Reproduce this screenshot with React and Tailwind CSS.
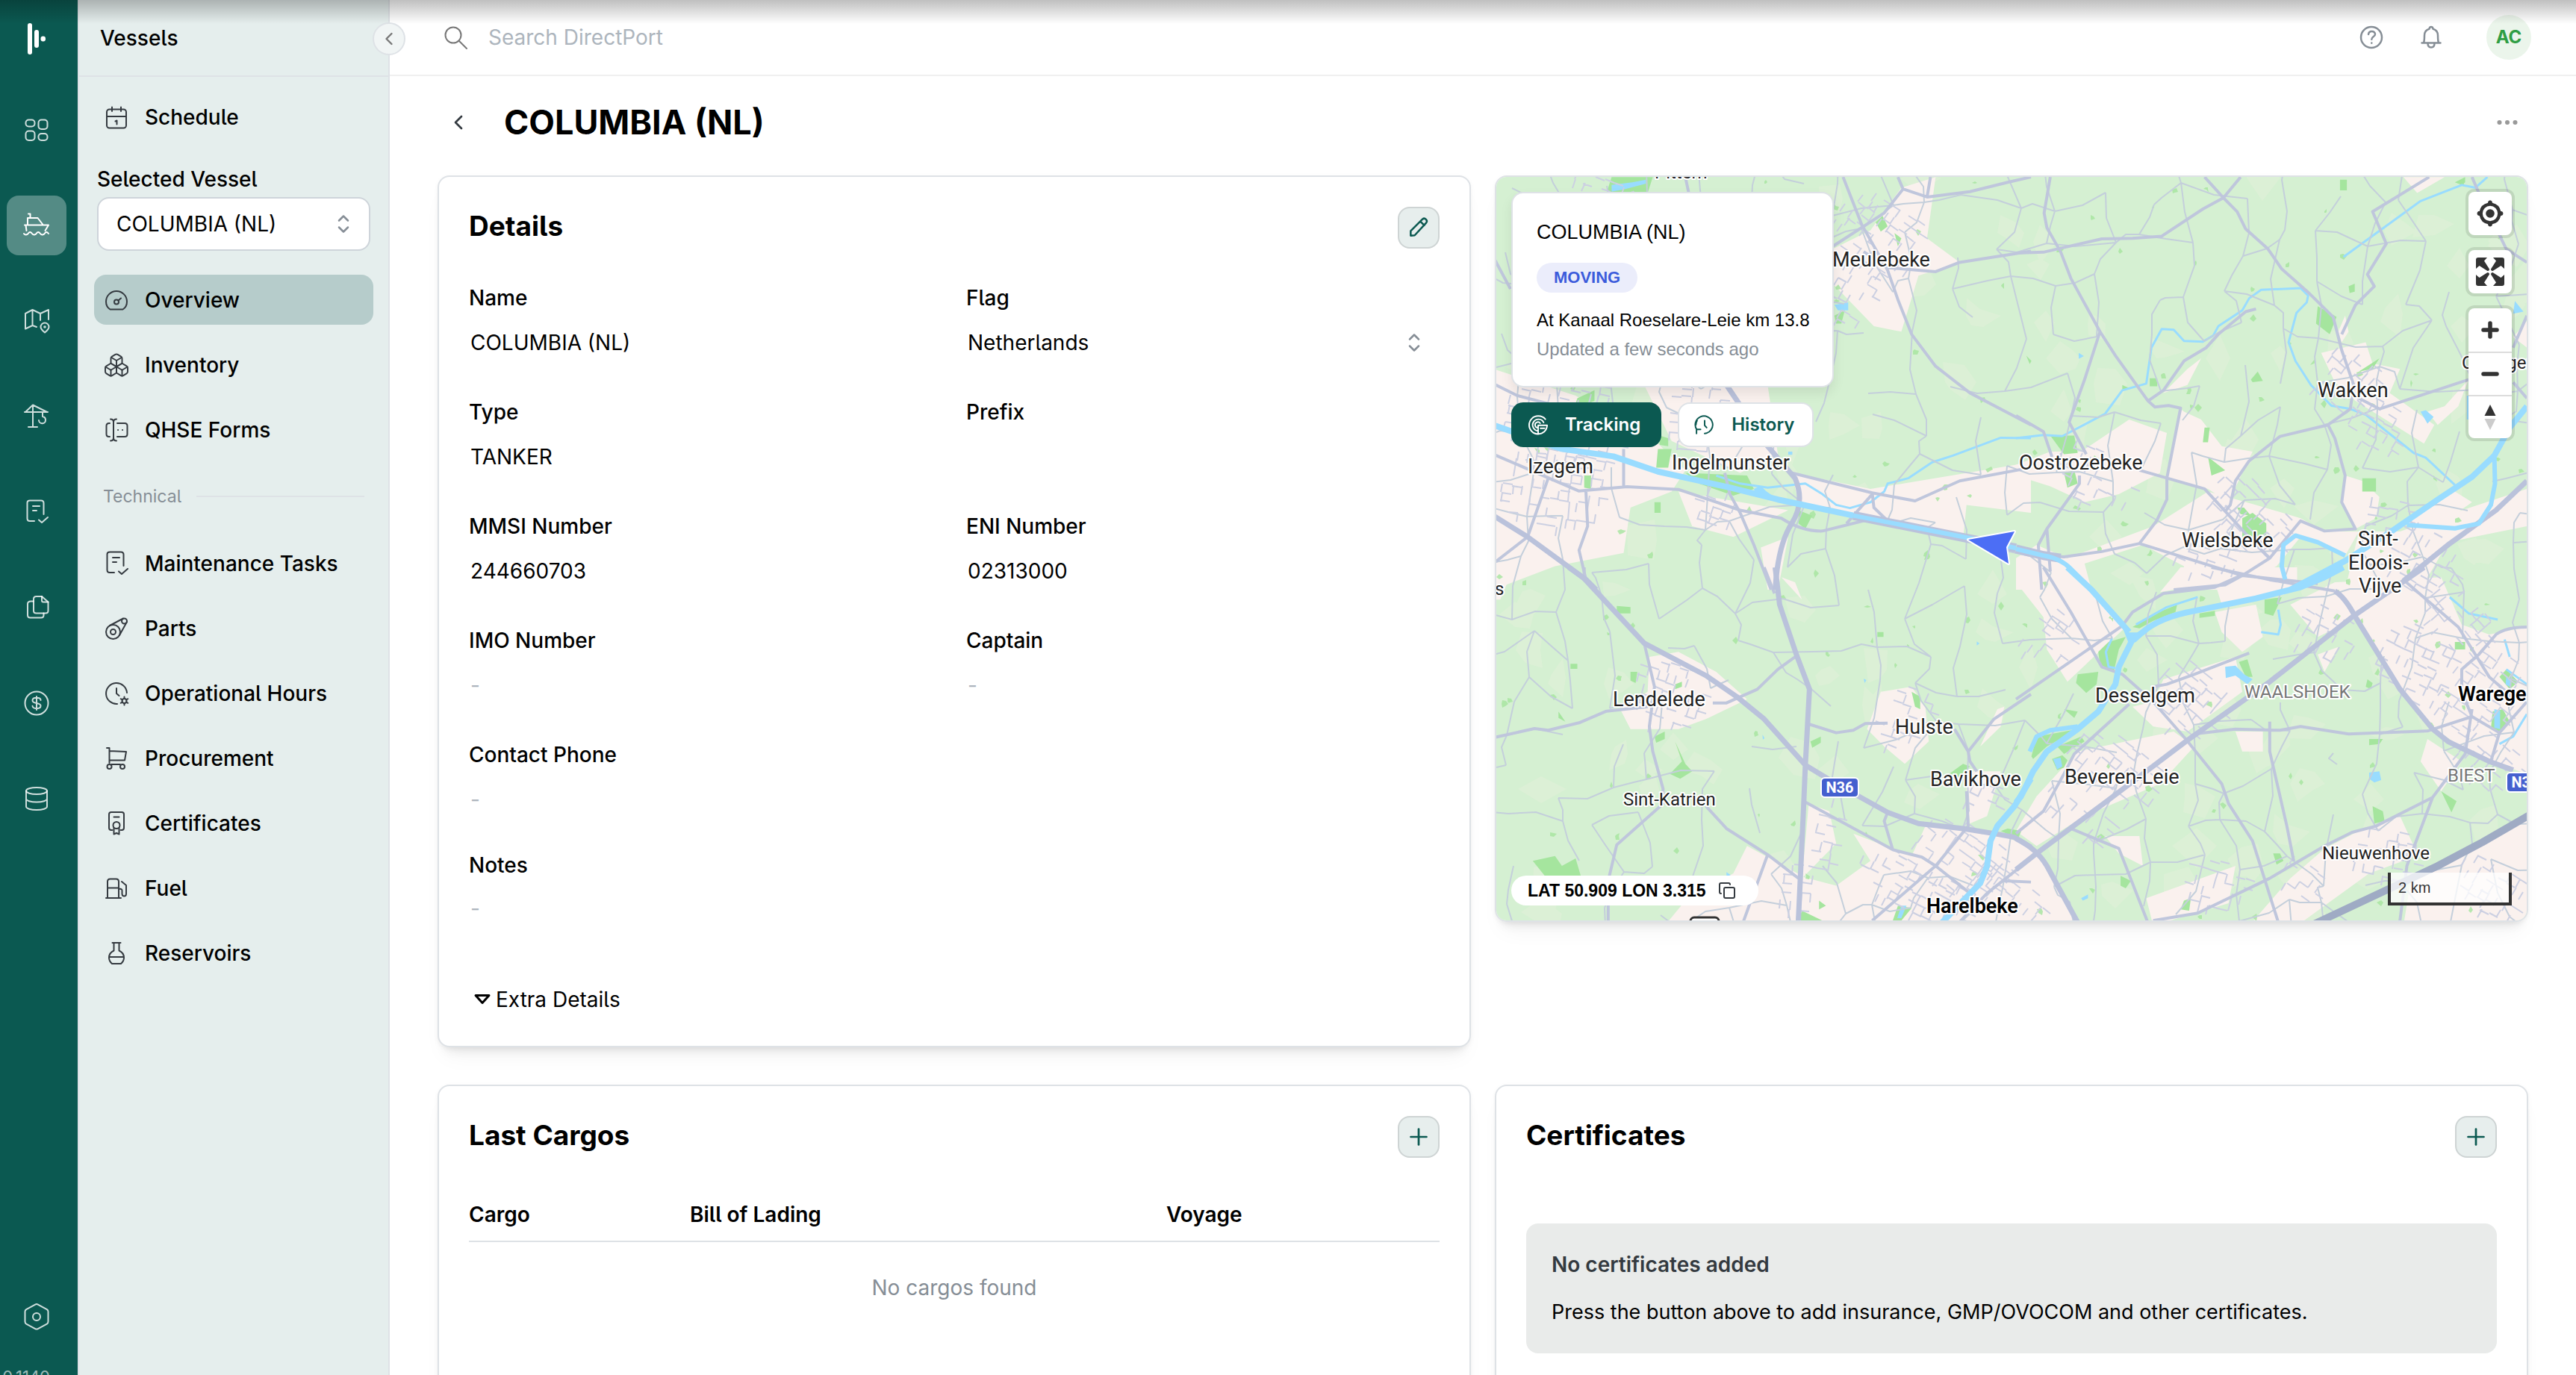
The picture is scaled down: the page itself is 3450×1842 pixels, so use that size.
import React from "react";
import { Boxes, ChevronLeft, Copy, Plus } from "lucide-react";

/* ---------- icons ---------- */

function Glyph({ children, className = "size-9", width = 2 }) {
  return (
    <svg viewBox="0 0 36 36" fill="none" stroke="currentColor" strokeWidth={width} strokeLinecap="round" strokeLinejoin="round" className={className} aria-hidden="true">
      {children}
    </svg>
  );
}

const icons = {
  dashboard: (
    <>
      <rect x="3.5" y="4.5" width="12" height="9" rx="4" />
      <rect x="20.5" y="4.5" width="12" height="12.5" rx="4" />
      <rect x="3.5" y="19.5" width="12" height="12.5" rx="4" />
      <rect x="20.5" y="23" width="12" height="9" rx="4" />
    </>
  ),
  ship: (
    <>
      <path d="M7 2.5h2.5V8M6 17V8h13.5l7 9M2 17.5h32l-4.500 7.500M3.500 17.500l1 7.500" />
      <path d="M1 29c1.500 2 4.500 2 6-.5s3.500-1.500 5 .5 4.500 2 6-.5 3.500-1.500 5 .5 4.500 2 6-.5 3.500-1.500 5 .5" />
    </>
  ),
  map: (
    <>
      <path d="M18 26l-5.500-2L3 28.500V8l9.500-5L23 8l11-5v13M12.500 3v21M23 8v9" />
      <path d="M29 33.500c-3-2.500-5.500-4.500-5.500-7.500a5.500 5.500 0 0 1 11 0c0 3-2.500 5-5.500 7.500z" />
      <circle cx="29" cy="26" r=".8" />
    </>
  ),
  crane: <path d="M2 12h31M3 12l10-9.500L32 12M13 2.500V32M7 32h12M26 12v6M26 18c2.500.5 4 2 4 4.500a4.500 4.500 0 0 1-9 .5" />,
  tasks: <path d="M15 30H9q-3.500 0-3.500-3.500v-21Q5.500 2.500 9 2.500h15q3.500 0 3.500 3.500v15M13 10h9M13 16h5M21 28.500l4 3.500 8-7" />,
  files: (
    <>
      <path d="M17.500 3H25l8.500 7.500V22q0 3.500-3.500 3.500H17.500Q14 25.500 14 22V6.500Q14 3 17.500 3z" />
      <path d="M25 3v5.500q0 2 2 2h6.500M14 9.500h-3.500Q6 9.500 6 13v15q0 3.500 3.500 3.500H24q3.500 0 3.500-3.500v-2.500" />
    </>
  ),
  dollar: (
    <>
      <circle cx="18" cy="18" r="15.500" />
      <path d="M18 9v18M23.500 14c0-2-2.500-3.200-5.500-3.200s-5.500 1-5.500 3.400 2.500 3.200 5.500 3.700 5.500 1.200 5.500 3.600-2.500 3.600-5.500 3.600-5.500-1.400-5.500-3.400" />
    </>
  ),
  database: (
    <>
      <ellipse cx="18" cy="7.500" rx="14" ry="4.500" />
      <path d="M4 7.500v21c0 2.500 6 4.500 14 4.500s14-2 14-4.500v-21M4 18c0 2.500 6 4.500 14 4.500S32 20.500 32 18" />
    </>
  ),
  settings: (
    <>
      <path d="M16.200 1.600q1.800-1 3.600 0l12 6.500q1.700 1 1.700 3v13.500q0 2-1.700 3l-12 6.500q-1.800 1-3.600 0l-12-6.500q-1.700-1-1.700-3V11.100q0-2 1.700-3z" />
      <circle cx="18" cy="18" r="5" />
    </>
  ),
  calendar: (
    <>
      <rect x="5" y="7.500" width="26" height="25" rx="3.500" />
      <path d="M12 4.500v5.500M24 4.500v5.500M5 17h26M16.500 23.500l2-1v5" />
    </>
  ),
  gauge: (
    <>
      <path d="M9.500 30.500C5.500 28 4 24 4 20a14 14 0 0 1 28 0c0 4-1.500 8-5.500 10.500z" />
      <circle cx="18" cy="20.500" r="3" />
      <path d="M20.500 18.500l3.500-3" />
    </>
  ),
  forms: <path d="M9 9H8q-3.500 0-3.500 3.500v11Q4.500 27 8 27h1M10 3.500q4 0 4 4v21q0 4-4 4M18 3.500q-4 0-4 4M18 32.500q-4 0-4-4M19 9h10q3.500 0 3.500 3.500v11Q32.500 27 29 27H19M20 18h.1M26 18h.1" />,
  belt: (
    <>
      <circle cx="13.500" cy="22.500" r="9.500" />
      <circle cx="13.500" cy="22.500" r="3.500" />
      <circle cx="28.500" cy="8" r="3.500" />
      <path d="M9 14L27 4.500M32 9L22 27" />
    </>
  ),
  hours: (
    <>
      <path d="M19 32A14 14 0 1 1 32 17M18 11v7l3.500 3" />
      <circle cx="28.500" cy="28" r="3" />
      <path d="M28.500 22.500V25M28.500 31v2.500M23.700 25.200l2.200 1.300M31 29.500l2.300 1.300M23.700 30.800l2.200-1.300M31 26.500l2.300-1.300" />
    </>
  ),
  cart: (
    <>
      <path d="M5 4h3.500v20M8.500 8L31 9l-2 11.500H8.500M11 26h12" />
      <circle cx="8.500" cy="29" r="3" />
      <circle cx="26" cy="29" r="3" />
    </>
  ),
  certificate: (
    <>
      <path d="M12.500 27H11q-3 0-3-3V6q0-3 3-3h14q3 0 3 3v18q0 3-3 3h-1.500M14.500 9.500h7" />
      <circle cx="18" cy="20.500" r="4.500" />
      <path d="M14.500 24v8.500l3.500-1.500 3.500 1.500V24" />
    </>
  ),
  fuel: <path d="M6 31V9q0-3.500 3.500-3.500h8q3.500 0 3.500 3.500v22M4 31h20M6 17.500h15M25 9l6 5v11.500q0 3-2.700 3t-2.800-3V21q0-2.500-4-2.500" />,
  flask: <path d="M12.500 4h11M14.500 4v10.500Q8 17.500 8 24q0 4.500 4 8h12q4-3.500 4-8 0-6.500-6.500-9.500V4M8 23h20" />,
  search: (
    <>
      <circle cx="15" cy="15" r="10.500" />
      <path d="M23 23l10 10" />
    </>
  ),
  help: (
    <>
      <circle cx="18" cy="18" r="14" />
      <path d="M14 14q.5-4 4.500-4t4.500 3.700q0 2-2.500 3.600-2.200 1.500-2.200 3.500M18.300 25.500v.3" />
    </>
  ),
  bell: (
    <>
      <path d="M5.500 25.500h25M8 25.500q1-3 1-10 0-7 6.500-8.800Q15.700 4 18 4t2.500 2.700Q27 8.500 27 15.500q0 7 1 10" />
      <path d="M13.500 26q0 5.500 4.500 5.500t4.500-5.500" />
    </>
  ),
  pencil: <path d="M6 30v-7L24 5q2.500-2 5 .5t.5 5L12 29.500zM20.500 8.500l6 6" />,
  selector: <path d="M12 13.500L18 7.500l6 6M12 22.500l6 6 6-6" />,
  radar: <path d="M18 34V19h15.500A15.500 15.500 0 1 1 18 3q8 0 12.500 5.500M18 28.500A10 10 0 1 1 27.500 14M18 23a4.800 4.800 0 1 1 3.500-7.500M18 34q13-1 15-12M22 24h7" />,
  history: <path d="M4 33v-7h7M4.500 26.500A15 15 0 1 1 18 33M18 11v8l3.500 4M3 18q0-4 2-7" />,
};

function Selector() {
  return <Glyph className="pointer-events-none size-9 text-[#868e96]" width={2.5}>{icons.selector}</Glyph>;
}

/* ---------- navigation ---------- */

const rail = ["dashboard", "ship", "map", "crane", "tasks", "files", "dollar", "database"];

function Rail() {
  return (
    <nav aria-label="Modules" className="flex w-[104px] shrink-0 flex-col bg-[#0b5951] pl-[9px] text-white/80">
      <div className="flex h-[104px] w-20 items-center justify-center">
        <svg viewBox="0 0 24 42" className="h-[44px] w-6" fill="#fff" aria-hidden="true">
          <rect x="0" y="0" width="6" height="42" rx="3" />
          <rect x="9" y="9" width="6" height="24" rx="3" />
          <rect x="17.500" y="17.500" width="6.500" height="7" rx="3.200" />
        </svg>
      </div>
      <div className="mt-[30px] flex flex-col gap-12">
        {rail.map((name) => (
          <a key={name} href={`#${name}`} aria-label={name} className={`flex size-20 items-center justify-center rounded-2xl ${name === "ship" ? "bg-white/30 text-white" : ""}`}>
            <Glyph>{icons[name]}</Glyph>
          </a>
        ))}
      </div>
      <a href="#settings" aria-label="settings" className="mt-auto flex size-20 items-center justify-center">
        <Glyph>{icons.settings}</Glyph>
      </a>
      <div className="flex h-[38px] w-[58px] items-end justify-end">
        <span className="-mb-4 text-[22px] leading-7 whitespace-nowrap text-white/60">0.1140</span>
      </div>
    </nav>
  );
}

function NavItem({ icon, label, active }) {
  return (
    <a href={`#${label}`} className={`flex h-[67px] items-center gap-5 rounded-2xl px-3 font-medium ${active ? "bg-[#b6cccb]" : ""}`}>
      <span className="text-[#343a40]">
        {icon === "boxes" ? <Boxes className="size-9" strokeWidth={1.3} /> : <Glyph>{icons[icon]}</Glyph>}
      </span>
      {label}
    </a>
  );
}

function Sidebar() {
  return (
    <aside className="relative w-[418px] shrink-0 border-x-2 border-[#dee2e6] bg-[#e5eeed]">
      <div className="flex h-[103px] items-center border-b-2 border-[#dee2e6] px-7 font-medium">
        <h2>Vessels</h2>
      </div>
      <button aria-label="Collapse sidebar" className="absolute top-[30px] -right-[23px] z-10 flex size-11 items-center justify-center rounded-full border-2 border-[#dee2e6] bg-[#f1f5f5] text-[#777]">
        <ChevronLeft className="size-7" strokeWidth={2} />
      </button>
      <div className="px-5 pt-5">
        <NavItem icon="calendar" label="Schedule" />
        <div className="mt-7 px-1">
          <label htmlFor="vessel" className="mb-0.5 block leading-[44px] font-medium">Selected Vessel</label>
          <div className="flex items-center rounded-2xl border-2 border-[#ced4da] bg-white">
            <select id="vessel" className="h-[68px] w-full appearance-none bg-transparent pl-6 outline-none">
              <option>COLUMBIA (NL)</option>
            </select>
            <span className="mr-4"><Selector /></span>
          </div>
        </div>
        <div className="mt-8 flex flex-col gap-5">
          <NavItem icon="gauge" label="Overview" active />
          <NavItem icon="boxes" label="Inventory" />
          <NavItem icon="forms" label="QHSE Forms" />
        </div>
        <div className="mt-[37px] flex h-[38px] items-center gap-5 px-3 text-[23px] text-[#868e96]">
          Technical
          <span className="h-0.5 flex-1 bg-[#dee2e6]" />
        </div>
        <div className="mt-[37px] flex flex-col gap-5">
          <NavItem icon="tasks" label="Maintenance Tasks" />
          <NavItem icon="belt" label="Parts" />
          <NavItem icon="hours" label="Operational Hours" />
          <NavItem icon="cart" label="Procurement" />
          <NavItem icon="certificate" label="Certificates" />
          <NavItem icon="fuel" label="Fuel" />
          <NavItem icon="flask" label="Reservoirs" />
        </div>
      </div>
    </aside>
  );
}

function TopBar() {
  return (
    <header className="flex h-[102px] items-center border-b-2 border-[#f0f0f0] pr-[60px] pl-[70px]">
      <label htmlFor="search" aria-label="Search" className="text-[#777]"><Glyph>{icons.search}</Glyph></label>
      <input id="search" placeholder="Search DirectPort" className="ml-[26px] h-16 flex-1 outline-none placeholder:text-[#adb5bd]" />
      <div className="flex items-center gap-11 text-[#868e96]">
        <button aria-label="Help"><Glyph width={2.5}>{icons.help}</Glyph></button>
        <button aria-label="Notifications"><Glyph width={2.5}>{icons.bell}</Glyph></button>
        <button className="ml-3 size-15 rounded-full bg-[#ebf5eb] text-2xl font-bold text-[#2f9e44]">AC</button>
      </div>
    </header>
  );
}

/* ---------- cards ---------- */

function Card({ title, action, className = "", children }) {
  return (
    <section className={`rounded-2xl border-2 border-[#dee2e6] bg-white p-10 shadow-[0_2px_6px_rgba(0,0,0,0.05),0_20px_30px_-10px_rgba(0,0,0,0.05),0_14px_14px_-10px_rgba(0,0,0,0.08)] ${className}`}>
      <div className="flex h-14 items-start justify-between">
        <h3 className="text-[37px] leading-[52px] font-bold">{title}</h3>
        <button aria-label={`${title} action`} className="flex size-14 items-center justify-center rounded-2xl border-2 border-[#ced4d4] bg-[#e7eeed] text-[#0b5951]">
          {action === "edit" ? <Glyph className="size-8" width={2.8}>{icons.pencil}</Glyph> : <Plus className="size-9" strokeWidth={1.8} />}
        </button>
      </div>
      {children}
    </section>
  );
}

const fields = [
  ["Name", "COLUMBIA (NL)"],
  ["Flag", "Netherlands"],
  ["Type", "TANKER"],
  ["Prefix", ""],
  ["MMSI Number", "244660703"],
  ["ENI Number", "02313000"],
  ["IMO Number", "", "-"],
  ["Captain", "", "-"],
  ["Contact Phone", "", "-"],
];

function Field({ label, value, placeholder }) {
  const id = label.toLowerCase().replace(" ", "-");
  return (
    <div>
      <label htmlFor={id} className="block leading-[44px] font-medium">{label}</label>
      {label === "Flag" ? (
        <div className="flex items-center">
          <select id={id} className="h-[76px] w-full appearance-none bg-transparent pl-0.5 outline-none">
            <option>{value}</option>
          </select>
          <span className="mr-4"><Selector /></span>
        </div>
      ) : (
        <input id={id} readOnly value={value} placeholder={placeholder} className="block h-[76px] w-full pl-0.5 outline-none placeholder:text-[#adb5bd]" />
      )}
    </div>
  );
}

function DetailsCard() {
  return (
    <Card title="Details" action="edit">
      <div className="mt-11 grid grid-cols-2 gap-x-8 gap-y-[33px]">
        {fields.map(([label, value, placeholder]) => (
          <Field key={label} label={label} value={value} placeholder={placeholder} />
        ))}
      </div>
      <div className="mt-7">
        <label htmlFor="notes" className="block leading-[44px] font-medium">Notes</label>
        <textarea id="notes" readOnly rows={1} placeholder="-" className="block h-[72px] w-full resize-none pl-0.5 leading-[72px] outline-none placeholder:text-[#adb5bd]" />
      </div>
      <button className="mt-16 flex h-11 items-center gap-1.5 pl-1.5">
        <svg viewBox="0 0 24 16" className="h-4 w-6" fill="none" stroke="#000" strokeWidth="3" strokeLinejoin="round" aria-hidden="true">
          <path d="M3 2.500h18l-9 10z" />
        </svg>
        Extra Details
      </button>
    </Card>
  );
}

function CargosCard() {
  return (
    <Card title="Last Cargos" className="min-h-[480px]">
      <table className="mt-10 w-full table-fixed text-left">
        <thead>
          <tr className="h-[72px] border-b-2 border-[#dee2e6]">
            <th className="w-[296px] font-semibold">Cargo</th>
            <th className="font-semibold">Bill of Lading</th>
            <th className="w-[366px] font-semibold">Voyage</th>
          </tr>
        </thead>
        <tbody>
          <tr className="h-[122px]">
            <td colSpan={3} className="text-center text-[#868e96]">No cargos found</td>
          </tr>
        </tbody>
      </table>
    </Card>
  );
}

function CertificatesCard() {
  return (
    <Card title="Certificates" className="min-h-[480px]">
      <div className="mt-[88px] rounded-2xl bg-[#e9ebea] px-[34px] py-[33px] leading-[44px]">
        <p className="font-semibold text-[#343a40]">No certificates added</p>
        <p className="mt-5 text-[27px]">Press the button above to add insurance, GMP/OVOCOM and other certificates.</p>
      </div>
    </Card>
  );
}

/* ---------- map ---------- */

// small deterministic generator so the lanes and fields are the same on every render
function makeRandom(seed) {
  let s = seed;
  return () => {
    s = (s * 16807) % 2147483647;
    return s / 2147483647;
  };
}

function buildLanes() {
  const rnd = makeRandom(77);
  const step = 60;
  const cols = 25;
  const rows = 19;
  const pts = [];
  for (let r = 0; r < rows; r++) {
    pts.push([]);
    for (let c = 0; c < cols; c++) {
      pts[r].push([Math.round((c - 0.5) * step + (rnd() - 0.5) * 46), Math.round((r - 0.5) * step + (rnd() - 0.5) * 46)]);
    }
  }
  let d = "";
  const join = (a, b) => {
    const mx = Math.round((a[0] + b[0]) / 2 + (rnd() - 0.5) * 18);
    const my = Math.round((a[1] + b[1]) / 2 + (rnd() - 0.5) * 18);
    d += `M${a[0]} ${a[1]}L${mx} ${my}L${b[0]} ${b[1]}`;
  };
  for (let r = 0; r < rows - 1; r++) {
    for (let c = 0; c < cols - 1; c++) {
      if (rnd() < 0.46) join(pts[r][c], pts[r][c + 1]);
      if (rnd() < 0.66) join(pts[r][c], pts[r + 1][c]);
    }
  }
  return d;
}

function buildPatches(seed, count, min, max) {
  const rnd = makeRandom(seed);
  let d = "";
  for (let i = 0; i < count; i++) {
    const x = rnd() * 1380;
    const y = rnd() * 994;
    const n = 4 + Math.floor(rnd() * 3);
    for (let k = 0; k < n; k++) {
      const a = (k / n) * Math.PI * 2;
      const rad = min + rnd() * (max - min);
      d += `${k ? "L" : "M"}${Math.round(x + Math.cos(a) * rad)} ${Math.round(y + Math.sin(a) * rad)}`;
    }
    d += "Z";
  }
  return d;
}

// centre x, centre y, radius x, radius y, street angle in degrees
const towns = [
  [510, 75, 70, 55, 35], [480, 150, 40, 50, 30], [90, 330, 90, 70, 12], [75, 420, 80, 60, 8], [270, 320, 50, 60, 5],
  [285, 435, 45, 32, 20], [800, 400, 65, 45, 25], [1135, 270, 45, 50, 40], [1180, 330, 45, 40, 30], [1010, 450, 70, 45, 45],
  [950, 510, 50, 35, 20], [1190, 450, 35, 30, 10], [1240, 510, 55, 50, 30], [150, 15, 60, 20, 20], [225, 690, 55, 50, 18],
  [545, 720, 45, 50, 20], [655, 820, 30, 35, 25], [440, 880, 26, 60, 12], [620, 910, 70, 55, 35], [560, 950, 90, 40, 28],
  [690, 960, 60, 35, 40], [740, 610, 35, 45, 35], [930, 700, 60, 50, 40], [830, 790, 75, 45, 38], [780, 850, 60, 30, 40],
  [1110, 610, 50, 40, 30], [1230, 650, 60, 60, 25], [1320, 690, 60, 70, 35], [1290, 590, 60, 40, 50], [1330, 780, 50, 40, 40],
  [1190, 905, 50, 40, 10], [960, 945, 50, 40, 15], [1080, 940, 40, 30, 35], [400, 950, 30, 40, 5], [1330, 950, 60, 40, 30],
];

function buildStreets() {
  const rnd = makeRandom(4211);
  let d = "";
  towns.forEach(([cx, cy, rx, ry, deg]) => {
    const t = (deg * Math.PI) / 180;
    const cos = Math.cos(t);
    const sin = Math.sin(t);
    const put = (u, v) => `${Math.round(cx + u * cos - v * sin)} ${Math.round(cy + u * sin + v * cos)}`;
    for (let u = -rx; u < rx; u += 13) {
      for (let v = -ry; v < ry; v += 12) {
        if ((u * u) / (rx * rx) + (v * v) / (ry * ry) > 0.9) continue;
        const j = (rnd() - 0.5) * 4;
        if (rnd() < 0.45) d += `M${put(u, v + j)}L${put(u + 13, v + j)}`;
        if (rnd() < 0.4) d += `M${put(u + j, v)}L${put(u + j, v + 12)}`;
      }
    }
  });
  return d;
}

const lanes = buildLanes();
const streets = buildStreets();
const fieldPatches = buildPatches(915, 150, 8, 34);
const copses = buildPatches(331, 170, 1, 6);

const tiles = [
  {
    at: "translate(-4 -7) scale(0.4592 0.3571)",
    urban: "M1190 60L1290 20L1265 250L1360 340L1240 390L1190 600L1110 580L990 420L990 290L1100 220ZM0 740L240 840L480 1020L560 1120L520 1200L400 1260L380 1430L180 1480L0 1568ZM440 800L800 800L830 1060L720 1130L520 1010ZM540 1200L860 1270L700 1370L580 1330ZM870 1130L1100 1190L1568 1090L1568 1280L1380 1250L1370 1380L1050 1290L890 1240ZM780 1410L860 1370L830 1568L800 1568Z",
    woods: "M345 20L465 20L450 80L330 80ZM1115 190l20-25l15 40l-20 20zM245 850l50-30l0 40l-60 30zM560 1130L740 1140L760 1190L700 1215L600 1170ZM890 1270l40 20l-20 50l-20-20zM480 1040l40 0l-10 70l-35 0zM995 540l30-20l-10 50l-15 0zM485 990l25 10l0 30l-25-5zM265 1140l20 0l0 50l-20-5zM470 1240l18 0l0 40l-18 0zM1170 230l20 20l-10 30z",
    water: "M345 50l60-10l40-10l0 15l-60 20l-40 10zM995 500l40-10l0 30l-30 0zM760 1190l20-12l15 20l20 18l-50-8zM860 1050l12 0l0 12l-12 0z",
    thin: "M650 1140L720 1170L800 1185L910 1170L960 1210L1000 1250L1040 1262L1100 1240L1140 1200L1150 1170L1210 1150L1280 1090L1340 1065L1480 998L1568 1000",
    bank: "M1050 1290L1300 1354L1524 1412",
    river: "M0 950L200 1040L350 1068L480 1125L690 1185L830 1230L1050 1290",
    side: "M1050 1290L1390 1375L1524 1412",
    major: "M0 1290L100 1370L270 1530L300 1568M680 800L800 1030L880 1150Q910 1240 870 1320Q830 1400 822 1568",
    roads: "M0 795L70 840L160 870M0 1470L100 1370M0 1060L250 1198L390 1182L540 1192L720 1270L840 1300Q900 1350 960 1348L1110 1300L1150 1308M1020 20L1075 200L1150 370L1180 480L1220 610L1290 730L1390 830L1568 950M990 280L1140 155L1195 65L1265 95L1390 75L1500 40L1568 20M1080 300L1150 360L1290 375L1360 340L1568 298M870 1130L1105 1205L1230 1235L1360 1160L1568 1110M1105 1205L1110 1260L1150 1310M675 1130L690 1210L720 1280L760 1400L810 1568M380 1040L380 1180M270 1198L275 1330L250 1420L270 1530M560 20L570 80M1195 65L1180 20M160 1150L100 1370M0 320L50 440M1265 95L1275 20M1030 1320L1105 1210",
  },
  {
    at: "translate(696 -7) scale(0.4592 0.3571)",
    urban: "M490 900L540 930L600 1030L690 1050L660 1130L620 1240L560 1190L440 1150L480 890ZM190 1050L330 930L440 980L420 1130L300 1210L200 1240L100 1180L0 1140L0 1100L100 1050ZM890 680L1020 640L1040 720L1120 740L1090 830L1220 950L1190 1020L990 860L930 790ZM1130 20L1250 20L1170 80ZM960 1140L1010 1160L1060 1220L1050 1300L990 1340L950 1240ZM0 1450L60 1400L150 1450L400 1330L560 1200L700 1250L830 1300L900 1350L1000 1350L960 1440L830 1370L760 1480L620 1568L480 1568L490 1480L370 1400L200 1470L220 1568L0 1568ZM1000 1350L1120 1350L1230 1300L1490 1190L1490 1330L1260 1390L1180 1568L960 1568ZM1140 1320L1280 1200L1330 1240L1230 1330ZM1320 780L1250 880L1200 900L1230 950L1290 880ZM1490 560L1450 620L1490 660ZM960 540L970 600L950 640L940 600ZM430 830L500 800L540 700L500 740Z",
    woods: "M880 505L935 545L915 610L875 570ZM100 990L170 990L180 1055L140 1060ZM140 1130l30-10l10 50l-30 15zM560 1070l50 50l-40 20zM660 1300l30-20l40 40l0 50l-70 10zM550 960l15 0l-5 55l-15 0zM685 780l20-30l15 35l-30 5zM945 30l20 0l0 40l-20 0zM1010 1150l40 0l0 50l-40 0zM1280 40l30-20l0 20l-10 10zM1000 750L1060 700L1040 740ZM390 775l22 0l0 30l-22 0zM310 800l25 15l-25 5zM645 1260l20 0l20 30l-30-5zM970 430l18-10l0 30l-15 5zM30 690l15 20l-5 12z",
    water: "M1180 900L1195 895L1218 920L1200 945ZM1455 485l25 40l-30 8zM183 680l15 12l-15 10zM1315 840l8 0l0 90l-8 0z",
    thin: "M0 1000L80 988L135 992L260 908L310 820L380 795L395 660L425 590L460 593L490 635L545 638L575 615L590 580L660 520L680 475L715 443L830 437L852 465L848 490L818 530L795 640L815 710L860 800L920 878L975 890L1020 912L1160 1055L1195 1073L1280 1175M955 320L1180 110L1300 50L1340 60L1375 20",
    bank: "M0 1415L80 1440L130 1450",
    side: "M1140 1325L1280 1338L1350 1320L1385 1250L1397 1170L1395 1060M960 1440L880 1390L815 1365L780 1400L775 1480L785 1530M0 1415L80 1440Q130 1450 160 1490L220 1568",
    river: "M1490 880L1440 960L1395 1065L1330 1145L1230 1230L1100 1345L960 1460L800 1568",
    major: "M1490 1160L1400 1270L1260 1400L1130 1535",
    roads: "M100 20L82 155L90 210L130 300L160 400L245 600L290 690L385 860L405 883L445 877L480 887L440 1150L440 1230L410 1310L360 1395M0 305L80 302L250 252L340 250L425 242L545 140L605 98L655 20M550 20L605 98L645 150L670 215L735 290L775 365L850 450L925 545L950 670L985 800L975 890L910 950L770 993L680 1085L640 1160L625 1250L610 1275M245 600L200 780L155 940L205 1060M385 860L430 820L490 710L555 660L590 610L670 525L700 515M0 915L80 975L105 1070M1205 20L1040 150L1080 270L1025 385L1045 430L990 500L950 610M1330 20L1350 80L1430 290L1490 340M1000 850L1060 890L1320 780M910 950L930 1000L960 1140L950 1240L990 1340L900 1348L830 1310L740 1450L660 1515L610 1550L460 1568M360 1120L550 1190L700 1400L740 1450M360 1395L660 1515L880 1545M100 1442L140 1445L250 1425L360 1395M185 1140L185 1170L90 1340L65 1400L75 1568M90 1340L100 1500M1450 790L1490 850M1490 540L1450 660",
  },
  {
    at: "translate(-4 523) scale(0.4592 0.3333)",
    urban: "M455 360L540 340L650 420L740 530L620 610L540 650L400 650L370 570L450 500ZM1130 500L1220 480L1260 560L1270 700L1200 790L1140 720L1090 650ZM1470 570L1490 560L1480 640L1420 720ZM1380 820L1480 820L1440 1000L1390 1030L1380 900ZM920 950L980 980L1000 1110L900 1250ZM1050 1070L1220 1160L1260 1040L1460 1070L1568 1120L1568 1440L900 1440L890 1240L1000 1280L1100 1180ZM500 1440L560 1340L700 1230L740 1120L900 1240L880 1440ZM1530 0L1568 0L1568 120ZM0 0L60 0L20 130L0 130ZM840 40L900 130L880 60Z",
    woods: "M515 830L550 780L530 700L560 790L580 820L545 850ZM115 1180L180 1160L200 1200L240 1170L255 1240L150 1240ZM470 680l30-20l0 30l-25 15zM400 420l20 0l-5 45l-15-10zM1500 1050L1540 1060L1530 1090L1480 1060ZM360 155l40 5l0 25l-40 0zM900 1380L960 1420L890 1420ZM1180 1360L1220 1370L1190 1420L1165 1420ZM1310 850l60-60l20 10l-40 50zM925 700l30-20l0 25l-25 20zM1220 500l25 20l0 50l-15-10zM190 580l20 40l-20-15zM225 388l20 0l0 20l-20 0zM1120 260l18 0l0 20l-18 0zM530 470l20-10l0 20l-20 10zM950 1340l20 20l-20 15z",
    water: "M1190 1360l15 0l-15 50l-12 0zM680 1225l12 12l-12 5zM1080 448l8 5l-5 12zM785 672l6 15l-5 5zM1410 298l8 8l-8 8z",
    river: "M1568 850L1520 960L1470 1040L1450 1100L1440 1200L1420 1270L1370 1340L1300 1440",
    major: "M220 0L265 45L440 305L620 435L710 520L790 610L910 795L1000 870L1150 985L1240 1030L1370 1050L1460 1070L1520 1085L1568 1125M822 0L835 150L885 355L922 490L910 795L905 960L889 1440",
    roads: "M0 685L120 648L160 655L250 625L330 578L450 560M640 545L680 545L770 490L830 410L885 355M440 305L470 480L455 640L465 740L495 890L495 950L360 1115L335 1260L335 1440M920 630L1000 665L1050 655L1085 628L1150 626M1568 510L1460 610L1385 740L1390 780L1410 820M1345 650L1385 740M1380 900L1385 1040L1290 1200L1105 1420M905 940L1165 1135L1250 1165L1290 1200L1390 1310M1150 985L1140 1020L1165 1135M620 960L680 1050L800 1155L890 1250M800 1155L725 1440M1568 1170L1440 1310L1350 1440M790 0L820 105M265 0L265 45M1490 1260L1568 1265",
  },
  {
    at: "translate(696 523) scale(0.4592 0.3333)",
    urban: "M0 0L150 0L320 240L250 330L150 460L90 330L80 200L0 60ZM480 0L820 0L820 80L780 110L600 150L580 60L420 100ZM580 180L700 150L720 280L660 340L600 260ZM930 60L1240 40L1300 230L1380 270L1490 240L1490 830L1340 760L1210 640L1100 470L1000 200L880 280L800 150ZM430 450L640 360L660 500L500 660L400 640L340 560L400 540ZM180 740L460 660L520 720L420 870L200 1000L60 1120L0 1060L60 920ZM640 660L720 660L720 740L660 740ZM1200 690L1300 780L1240 900L1180 780ZM1120 1000L1160 1120L1130 1180L1030 1230L820 1440L680 1440L800 1250L900 1130L1000 1060ZM0 1080L60 1140L180 1440L0 1440ZM1490 1010L1360 1110L1150 1270L1130 1440L1490 1440ZM380 1330L640 1200L620 1350L400 1440ZM260 1080L360 1080L370 1200L300 1150ZM880 350L940 320L900 420Z",
    woods: "M45 760L60 680L180 650L90 720L50 770ZM180 430L240 420L235 470L205 505L175 465ZM340 240L400 190L470 150L465 180L400 215L360 245ZM725 130L775 120L750 195L725 185ZM240 340L270 300L320 280L300 330L285 420L245 390ZM120 720L190 680L200 700L140 750ZM1240 900L1285 940L1270 985ZM750 1150l20 0l10 30l-20 15zM1040 960l30 20l5 40l-30 10zM1410 440L1430 410L1465 460L1440 490ZM650 380l25-10l15 70l-20 0zM490 1340L510 1330L505 1380L480 1375ZM305 1240l30 20l-15 30l-15-10zM535 185l45-10l0 20l-45 8zM1280 300l30 0l0 30l-30 0zM1390 580l30-10l20 50l-30 40l-25-10zM1025 450l15 15l-5 25l-15-10zM1030 690l40 0l-10 20l-30 5zM105 770l30-15l15 20l-10 30l-20 10zM140 570l40 10l-10 25z",
    water: "M1030 825L1060 820L1065 855L1045 865L1030 850ZM610 400L640 395L665 430L690 450L675 470L640 435L612 445ZM108 770L130 765L135 800L120 812ZM310 240L330 262L380 262L350 300L330 310ZM1395 570L1412 575L1412 650L1395 645ZM190 1330l20-15l0 15l-15 10zM1430 440l15 10l-5 30l-12-10z",
    thin: "M1265 120L1320 185L1405 210M280 285L262 340L270 400L290 405M765 170L772 230L765 270L715 260M1425 290L1440 360M350 230L440 160L530 120M1430 410L1490 470M1490 590L1450 680L1410 710M1230 1195L1350 1110",
    side: "M40 740L60 680L100 655L180 640",
    river: "M955 0L900 40L830 80L700 125L520 175Q420 200 370 260L340 290L300 400L290 470L240 580L180 650L90 740L50 820L15 920L0 945M150 0L220 90L330 260",
    major: "M1190 0L980 200L740 460L500 695L260 945L60 1150L0 1215M930 95Q960 120 990 200L1120 490L1215 650L1260 700L1380 780L1450 815M0 1090Q60 1130 90 1200L185 1440",
    roads: "M570 0L740 50L930 95M660 30L580 80L430 105L340 180L310 235L0 530M80 0L160 180L250 400L310 430L400 540L495 690L600 870L620 950L690 1100L768 1440M400 480L440 470L520 430L680 345M520 670L640 650L770 655L830 640L970 670L1200 658L1330 600M330 550L170 750L140 830L80 980L0 1070M1215 925L1050 1040L980 1065L900 1120L740 1250L530 1390L400 1420M1330 570L1310 750L1215 925L1140 1200L1118 1440M1490 240Q1430 240 1400 270L1350 350L1300 410L1300 500L1330 600L1410 665L1385 780M1130 50L1290 240L1380 440L1430 500M1410 665L1490 540M160 1050L300 1130L388 1440M740 620L740 740L790 1040L810 1180",
    motorway: "M1500 994L1360 1105L1230 1200L860 1440",
  },
];

const layers = [
  ["urban", { fill: "#faf1ee" }],
  ["woods", { fill: "#a5e59e" }],
  ["water", { fill: "#99dcff" }],
  ["thin", { stroke: "#99dcff", strokeWidth: 3 }],
  ["roads", { stroke: "#bfc6dc", strokeWidth: 4 }],
  ["major", { stroke: "#bac2db", strokeWidth: 7 }],
  ["bank", { stroke: "#bac2db", strokeWidth: 12 }],
  ["side", { stroke: "#99dcff", strokeWidth: 6 }],
  ["river", { stroke: "#99dcff", strokeWidth: 8 }],
  ["motorway", { stroke: "#9fabc4", strokeWidth: 10 }],
];

const places = [
  ["Pittem", 212, 2, 24], ["Meulebeke", 450, 120, 27], ["Wakken", 1100, 295, 27], ["Oeselgem", 1293, 257, 24],
  ["Oostrozebeke", 700, 392, 27], ["Wielsbeke", 918, 496, 27], ["Sint-", 1154, 494, 27], ["Eloois-", 1141, 526, 27], ["Vijve", 1155, 557, 27],
  ["Izegem", 42, 397, 27], ["Ingelmunster", 235, 392, 27], ["s", -2, 560, 24], ["Lendelede", 156, 709, 27], ["Hulste", 534, 746, 27],
  ["Bavikhove", 581, 816, 27], ["Sint-Katrien", 170, 842, 24], ["Desselgem", 802, 704, 27], ["Beveren-Leie", 761, 813, 27], ["Nieuwenhove", 1106, 914, 24],
];

function Shield({ x, y }) {
  return (
    <g>
      <rect x={x} y={y} width="50" height="26" rx="5" fill="#4560cf" stroke="#fff" strokeWidth="2" />
      <text x={x + 25} y={y + 20} textAnchor="middle" fontSize="20" fontWeight="700" fill="#fff">N36</text>
    </g>
  );
}

function MapCanvas() {
  return (
    <svg viewBox="0 0 1380 996" preserveAspectRatio="xMidYMid slice" className="absolute inset-0 size-full font-[Roboto,sans-serif]" role="img" aria-label="Vessel map">
      <rect width="1380" height="996" fill="#d5f0d2" />
      <path d={fieldPatches} fill="#e1f0d9" opacity="0.55" />
      {layers.map(([name, style]) => (
        <React.Fragment key={name}>
          {name === "woods" && <path d={copses} fill="#a5e59e" opacity="0.8" />}
          {name === "roads" && (
            <g fill="none" stroke="#c4cfdb" strokeLinejoin="round">
              <path d={lanes} strokeWidth="2" />
              <path d={streets} strokeWidth="2" stroke="#ccd0e2" />
            </g>
          )}
          {tiles.map((tile) =>
            tile[name] ? (
              <path key={tile.at} d={tile[name]} transform={tile.at} fill="none" strokeLinejoin="round" vectorEffect="non-scaling-stroke" {...style} />
            ) : null
          )}
        </React.Fragment>
      ))}
      <g fill="#222" stroke="#fff" strokeWidth="4" strokeLinejoin="round" paintOrder="stroke">
        {places.map(([name, x, y, size]) => (
          <text key={name} x={x} y={y} fontSize={size}>{name}</text>
        ))}
        <text x="576" y="986" fontSize="27" fontWeight="600" fill="#000">Harelbeke</text>
        <text x="1288" y="702" fontSize="27" fontWeight="600" fill="#000">Waregem</text>
        <text x="1002" y="698" fontSize="24" fill="#777">WAALSHOEK</text>
        <text x="1274" y="810" fontSize="24" fill="#777">BIEST</text>
      </g>
      <Shield x={435} y={805} />
      <Shield x={1353} y={798} />
      <rect x="260" y="992" width="38" height="24" rx="5" fill="#fff" stroke="#333" strokeWidth="3" />
      <path d="M632 486L694 475L683 496L686 518Z" fill="#4c6ef5" stroke="#fff" strokeWidth="4" strokeLinejoin="round" paintOrder="stroke" />
    </svg>
  );
}

const controlBox = "flex flex-col overflow-hidden rounded-lg bg-white shadow-[0_0_0_4px_rgba(0,0,0,0.1)]";

function MapControls() {
  return (
    <div className="absolute top-5 right-5 flex w-[58px] flex-col gap-5 text-[#333]">
      <div className={controlBox}>
        <button aria-label="Find my location" className="flex h-[58px] items-center justify-center">
          <svg viewBox="0 0 20 20" className="size-[58px]" fill="#333" aria-hidden="true">
            <path d="M10 4C9 4 9 5 9 5v.1A5 5 0 0 0 5.100 9H5s-1 0-1 1 1 1 1 1h.1A5 5 0 0 0 9 14.900v.1s0 1 1 1 1-1 1-1v-.1a5 5 0 0 0 3.900-3.900h.1s1 0 1-1-1-1-1-1h-.1A5 5 0 0 0 11 5.100V5s0-1-1-1zm0 2.500a3.500 3.500 0 1 1 0 7 3.500 3.500 0 1 1 0-7z" />
            <circle cx="10" cy="10" r="2" />
          </svg>
        </button>
      </div>
      <div className={controlBox}>
        <button aria-label="Fullscreen" className="flex h-[58px] items-center justify-center">
          <svg viewBox="0 0 40 40" className="size-10" fill="#333" aria-hidden="true">
            {[0, 90, 180, 270].map((deg) => (
              <path key={deg} transform={`rotate(${deg} 20 20)`} d="M4 1h12l-4 4.500 7 11q0 2.500-2.500 2.500L5.500 12 1 16V4q0-3 3-3z" />
            ))}
          </svg>
        </button>
      </div>
      <div className={controlBox}>
        <button aria-label="Zoom in" className="flex h-[58px] items-center justify-center">
          <svg viewBox="0 0 24 24" className="size-6" stroke="#333" strokeWidth="5.500" strokeLinecap="round" aria-hidden="true"><path d="M12 3v18M3 12h18" /></svg>
        </button>
        <button aria-label="Zoom out" className="flex h-[58px] items-center justify-center border-t-2 border-[#ddd]">
          <svg viewBox="0 0 24 24" className="size-6" stroke="#333" strokeWidth="5.500" strokeLinecap="round" aria-hidden="true"><path d="M3 12h18" /></svg>
        </button>
        <button aria-label="Reset bearing" className="flex h-[58px] items-center justify-center border-t-2 border-[#ddd]">
          <svg viewBox="0 0 16 34" className="h-[34px] w-4" aria-hidden="true">
            <path d="M8 0l7.500 15H.5z" fill="#333" />
            <path d="M8 34l7.500-15H.5z" fill="#ccc" />
          </svg>
        </button>
      </div>
    </div>
  );
}

function MapCard() {
  return (
    <section className="relative h-[1000px] overflow-hidden rounded-2xl border-2 border-[#dee2e6] shadow-[0_2px_6px_rgba(0,0,0,0.05),0_20px_30px_-10px_rgba(0,0,0,0.05),0_14px_14px_-10px_rgba(0,0,0,0.08)]">
      <MapCanvas />
      <div className="absolute top-5 left-5 flex flex-col items-start gap-5 text-2xl [font-feature-settings:normal]">
        <div className="flex flex-col items-start rounded-2xl border-2 border-[#dee2e6] bg-white pt-[30px] pr-[30px] pb-7 pl-8 font-['Liberation_Sans',Arial,sans-serif] shadow-[0_8px_16px_rgba(0,0,0,0.08)]">
          <p className="text-[27px] leading-[44px]">COLUMBIA (NL)</p>
          <span className="mt-[19px] flex h-10 items-center rounded-full bg-[#ebedfb] px-[23px] text-[22px] font-bold text-[#3b5bdb]">MOVING</span>
          <p className="mt-[19px] leading-9">At Kanaal Roeselare-Leie km 13.8</p>
          <p className="leading-[42px] text-[#868e96]">Updated a few seconds ago</p>
        </div>
        <div className="flex gap-[22px] font-semibold">
          <button className="flex h-15 items-center gap-[22px] rounded-2xl bg-[#0b5951] pr-7 pl-[22px] text-white">
            <Glyph className="size-7" width={2.5}>{icons.radar}</Glyph>
            Tracking
          </button>
          <button className="flex h-15 items-center gap-[22px] rounded-2xl border-2 border-[#dee2e6] bg-white pr-6 pl-5 text-[#0b5951]">
            <Glyph className="size-7" width={2.5}>{icons.history}</Glyph>
            History
          </button>
        </div>
      </div>
      <MapControls />
      <button className="absolute bottom-5 left-5 flex h-10 items-center gap-4 rounded-full bg-white pr-[30px] pl-[22px] font-['Liberation_Sans',Arial,sans-serif] text-[23px] font-bold">
        LAT 50.909 LON 3.315
        <Copy className="size-6 text-[#343a40]" strokeWidth={2} />
      </button>
      <div className="absolute right-5 bottom-5 h-11 w-[166px] border-4 border-t-0 border-[#333] bg-white/75 pl-2.5 font-['Liberation_Sans',Arial,sans-serif] text-xl leading-[40px] text-[#333]">2 km</div>
    </section>
  );
}

/* ---------- page ---------- */

export default function App() {
  return (
    <div className="relative flex h-screen overflow-hidden bg-white font-['Inter','Liberation_Sans',sans-serif] text-[28px] leading-9 text-black [font-feature-settings:'cv05']">
      <Rail />
      <Sidebar />
      <div className="min-w-0 flex-1">
        <TopBar />
        <main className="px-16 pt-8">
          <div className="mb-[41px] flex h-15 items-center">
            <button aria-label="Back" className="flex w-14 justify-center text-[#343a40]"><ChevronLeft className="size-8" strokeWidth={2} /></button>
            <h1 className="ml-[33px] text-[45px] leading-[60px] font-bold">COLUMBIA (NL)</h1>
            <button aria-label="More" className="mr-3.5 ml-auto">
              <svg viewBox="0 0 28 8" className="h-2 w-7" fill="#999" aria-hidden="true">
                <circle cx="3.500" cy="4" r="3" />
                <circle cx="14" cy="4" r="3" />
                <circle cx="24.500" cy="4" r="3" />
              </svg>
            </button>
          </div>
          <div className="grid grid-cols-2 items-start gap-x-8 gap-y-[50px]">
            <DetailsCard />
            <MapCard />
            <CargosCard />
            <CertificatesCard />
          </div>
        </main>
      </div>
      <div className="pointer-events-none absolute inset-x-0 top-0 z-20 h-8 bg-gradient-to-b from-black/25 to-transparent" />
    </div>
  );
}
